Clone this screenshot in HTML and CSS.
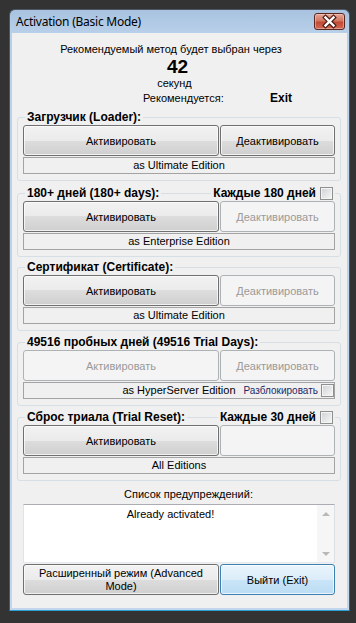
FILE: index.html
```html
<!DOCTYPE html>
<html lang="ru">
<head>
  <meta charset="UTF-8" />
  <title>Activation (Basic Mode)</title>
  <link rel="stylesheet" href="styles.css">
</head>
<body>
  <div class="window">
    <div class="titlebar">
      <span class="title">Activation (Basic Mode)</span>
      <button class="close" type="button" aria-label="Close">
        <svg width="29" height="15" viewBox="0 0 29 15">
          <path d="M10.5 3.5 L18.5 11.5 M18.5 3.5 L10.5 11.5" stroke="#4a1a14" stroke-width="4.6" stroke-linecap="square" />
          <path d="M10.5 3.5 L18.5 11.5 M18.5 3.5 L10.5 11.5" stroke="#fff" stroke-width="2.4" stroke-linecap="square" />
        </svg>
      </button>
    </div>

    <div class="client">
      <div class="countdown">
        <div class="cd-msg">Рекомендуемый метод будет выбран через</div>
        <div class="cd-num">42</div>
        <div class="cd-unit">секунд</div>
        <div class="cd-rec">
          <span>Рекомендуется:</span>
          <b>Exit</b>
        </div>
      </div>

      <!-- Loader -->
      <div class="group">
        <div class="group-head">
          <span>Загрузчик (Loader):</span>
        </div>
        <div class="btn-row">
          <button class="btn" type="button">Активировать</button>
          <button class="btn" type="button">Деактивировать</button>
        </div>
        <div class="edition">as Ultimate Edition</div>
      </div>

      <!-- 180 days -->
      <div class="group group-second">
        <div class="group-head">
          <span>180+ дней (180+ days):</span>
          <label class="head-check">Каждые 180 дней <input type="checkbox" class="check" /></label>
        </div>
        <div class="btn-row">
          <button class="btn" type="button">Активировать</button>
          <button class="btn" type="button" disabled>Деактивировать</button>
        </div>
        <div class="edition">as Enterprise Edition</div>
      </div>

      <!-- Certificate -->
      <div class="group">
        <div class="group-head">
          <span>Сертификат (Certificate):</span>
        </div>
        <div class="btn-row">
          <button class="btn" type="button">Активировать</button>
          <button class="btn" type="button" disabled>Деактивировать</button>
        </div>
        <div class="edition">as Ultimate Edition</div>
      </div>

      <!-- Trial days -->
      <div class="group">
        <div class="group-head">
          <span>49516 пробных дней (49516 Trial Days):</span>
        </div>
        <div class="btn-row">
          <button class="btn" type="button" disabled>Активировать</button>
          <button class="btn" type="button" disabled>Деактивировать</button>
        </div>
        <div class="edition">
          as HyperServer Edition
          <label class="unlock">Разблокировать <input type="checkbox" class="check" /></label>
        </div>
      </div>

      <!-- Trial reset -->
      <div class="group">
        <div class="group-head">
          <span>Сброс триала (Trial Reset):</span>
          <label class="head-check">Каждые 30 дней <input type="checkbox" class="check" /></label>
        </div>
        <div class="btn-row">
          <button class="btn" type="button">Активировать</button>
          <button class="btn" type="button" disabled></button>
        </div>
        <div class="edition">All Editions</div>
      </div>

      <div class="warn-title">Список предупреждений:</div>
      <div class="warn-box">
        <div class="warn-text">Already activated!</div>
        <div class="scrollbar">
          <span class="arrow arrow-up"></span>
          <span class="arrow arrow-down"></span>
        </div>
      </div>

      <div class="btn-row bottom-row">
        <button class="btn btn-adv" type="button">Расширенный режим (Advanced<br>Mode)</button>
        <button class="btn btn-default" type="button">Выйти (Exit)</button>
      </div>
    </div>
  </div>
</body>
</html>
```

FILE: styles.css
```css
* {
  margin: 0;
  padding: 0;
  box-sizing: border-box;
}

body {
  background: #333333;
  font-family: 'Liberation Sans', Arial, sans-serif;
  font-size: 11px;
  color: #000;
}

/* window frame */
.window {
  width: 341px;
  margin: 9px 0 0 9px;
  padding: 0 2px 2px;
  border: 1px solid #4b5765;
  border-bottom-color: #2d9fd0;
  border-radius: 6px 6px 0 0;
  background: linear-gradient(#a8c2df, #b9d0e9 24px, #c2d7ed);
}

.titlebar {
  height: 23px;
  display: flex;
  justify-content: space-between;
  align-items: center;
  padding: 0 2px 0 4px;
}

.title {
  font-family: 'Noto Sans', sans-serif;
  font-size: 12px;
  letter-spacing: -0.25px;
  color: #000;
}

.close {
  align-self: flex-start;
  margin-top: 3px;
  width: 31px;
  height: 17px;
  border: 1px solid #5b2820;
  border-radius: 3px;
  background: linear-gradient(#e6a797, #d27662 45%, #c24a33 55%, #d06a55);
  box-shadow: inset 0 0 0 1px rgba(255, 220, 210, 0.45);
  display: flex;
  align-items: center;
  justify-content: center;
}

.client {
  background: #f0f0f0;
  padding: 9px 0 13px;
}

/* countdown */
.countdown {
  padding-bottom: 1px;
  line-height: 14px;
}

.cd-msg {
  text-align: center;
  padding-right: 17px;
}

.cd-num {
  text-align: center;
  padding-right: 4px;
  font-size: 19px;
  font-weight: bold;
  line-height: 21px;
}

.cd-unit {
  text-align: center;
  padding-right: 10px;
  margin-top: -1px;
}

.cd-rec {
  display: grid;
  grid-template-columns: 127px auto;
  padding-left: 131px;
  margin-top: 1px;
}

.cd-rec b {
  font-size: 12px;
}

/* group boxes */
.group {
  margin: 11px 6px 0 5px;
  padding: 0 5px 6px;
  border: 1px solid #d5dfe5;
  border-radius: 3px;
}

.group-second {
  margin-top: 12px;
  margin-bottom: -1px;
}

.group-head {
  display: flex;
  justify-content: space-between;
  align-items: center;
  height: 14px;
  margin: -8px 0 1px;
  padding-left: 2px;
  font-size: 12px;
  font-weight: bold;
  line-height: 14px;
}

.group-head > span,
.head-check {
  background: #f0f0f0;
  padding: 0 2px;
}

.head-check {
  display: flex;
  align-items: center;
  gap: 4px;
}

.check {
  appearance: none;
  width: 13px;
  height: 13px;
  border: 1px solid #8e8f8f;
  background: linear-gradient(135deg, #cfd2d6, #f7f7f7);
  box-shadow: inset 0 0 0 1px #f4f4f4;
}

.btn-row {
  display: grid;
  grid-template-columns: 196px 115px;
  gap: 1px;
}

.btn {
  height: 31px;
  font: inherit;
  color: #000;
  border: 1px solid #707070;
  border-radius: 3px;
  background: linear-gradient(#f2f2f2, #ebebeb 50%, #dddddd 50%, #cfcfcf);
  box-shadow: inset 0 0 0 1px rgba(255, 255, 255, 0.7);
}

.btn:disabled {
  color: #9a9a9a;
  border-color: #adb2b5;
  background: #f4f4f4;
  box-shadow: none;
}

.edition {
  position: relative;
  height: 17px;
  margin-top: 1px;
  border: 1px solid #a3a3a3;
  text-align: center;
  line-height: 15px;
}

.unlock {
  position: absolute;
  right: 0;
  top: 0;
  bottom: 0;
  display: flex;
  align-items: center;
  gap: 3px;
  font-size: 10px;
  color: #1c2a66;
  background: #f0f0f0;
}

/* warnings */
.warn-title {
  margin-top: 6px;
  padding-left: 18px;
  text-align: center;
  line-height: 14px;
}

.warn-box {
  display: flex;
  height: 59px;
  margin: 3px 12px 0 11px;
  border: 1px solid;
  border-color: #abadb3 #dbdfe6 #e3e9ef #e2e3ea;
  background: #fff;
}

.warn-text {
  flex: 1;
  padding-top: 2px;
  text-align: center;
  line-height: 14px;
}

.scrollbar {
  width: 17px;
  display: flex;
  flex-direction: column;
  justify-content: space-between;
  align-items: center;
  padding: 7px 0 6px;
  background: #f6f6f6;
}

.arrow {
  width: 0;
  height: 0;
  border-left: 4px solid transparent;
  border-right: 4px solid transparent;
}

.arrow-up {
  border-bottom: 4px solid #b8b8b8;
}

.arrow-down {
  border-top: 4px solid #b8b8b8;
}

.bottom-row {
  margin: 1px 12px 0 11px;
}

.btn-adv {
  line-height: 13px;
}

.btn-default {
  border-color: #3c7fb1;
  background: linear-gradient(#e8f4fc, #dcedf9 50%, #c9e4f7 50%, #bcddf4);
}
```
